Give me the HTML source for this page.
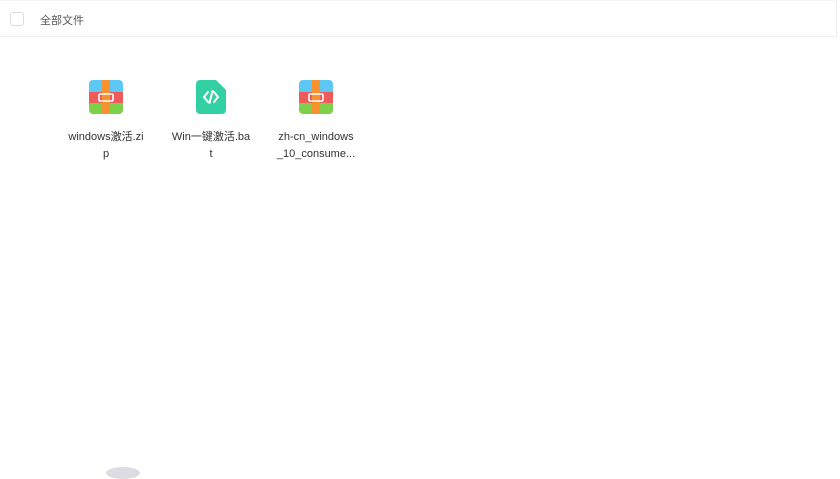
<!DOCTYPE html>
<html><head><meta charset="utf-8"><style>
body{margin:0;width:840px;height:471px;background:#fff;font-family:"Liberation Sans","Noto Sans CJK SC",sans-serif;overflow:hidden;position:relative}
.hdr{position:absolute;left:0;top:0;width:837px;height:37px;border-bottom:1px solid #eee;border-right:1px solid #eee;border-top:1px solid #f5f5f5;box-sizing:border-box}
.cb{position:absolute;left:10px;top:11px;width:12px;height:12px;border:1px solid #ddd;border-radius:3px}
.t{position:absolute;left:40px;top:11px;font-size:11px;color:#555}
.item{position:absolute;top:80px;width:90px;text-align:center}
.item svg{display:block;margin:0 auto}
.lbl{margin:15px auto 0;width:80px;font-size:11px;line-height:17px;color:#333;word-break:break-all}
</style></head><body>
<div class="hdr"><div class="cb"></div><div class="t">全部文件</div></div>
<div class="item" style="left:61px">
<svg width="34" height="34" viewBox="0 0 34 34"><defs><clipPath id="c"><rect width="34" height="34" rx="4"/></clipPath></defs><g clip-path="url(#c)"><rect width="34" height="12" fill="#5ec8f4"/><rect y="12" width="34" height="11" fill="#ef5b5b"/><rect y="23" width="34" height="11" fill="#7cd04a"/><rect x="13" width="8" height="34" fill="#f7922e"/></g><rect x="10" y="14" width="14" height="7" rx="1" fill="none" stroke="#fff" stroke-width="1.6"/></svg>
<div class="lbl">windows激活.zi<br>p</div></div>
<div class="item" style="left:166px">
<svg width="34" height="34" viewBox="0 0 34 34"><path d="M6 0H22L32 10V30a4 4 0 0 1-4 4H6a4 4 0 0 1-4-4V4a4 4 0 0 1 4-4z" fill="#33d0a3"/><path d="M14 12l-4 5 4 5M20 12l4 5-4 5M18.5 11l-3 12" fill="none" stroke="#fff" stroke-width="2" stroke-linecap="round"/></svg>
<div class="lbl">Win一键激活.ba<br>t</div></div>
<div class="item" style="left:271px">
<svg width="34" height="34" viewBox="0 0 34 34"><defs><clipPath id="d"><rect width="34" height="34" rx="4"/></clipPath></defs><g clip-path="url(#d)"><rect width="34" height="12" fill="#5ec8f4"/><rect y="12" width="34" height="11" fill="#ef5b5b"/><rect y="23" width="34" height="11" fill="#7cd04a"/><rect x="13" width="8" height="34" fill="#f7922e"/></g><rect x="10" y="14" width="14" height="7" rx="1" fill="none" stroke="#fff" stroke-width="1.6"/></svg>
<div class="lbl">zh-cn_windows<br>_10_consume...</div></div>
<div style="position:absolute;left:106px;top:467px;width:34px;height:12px;border-radius:50%;background:#dcdce2"></div>
</body></html>
